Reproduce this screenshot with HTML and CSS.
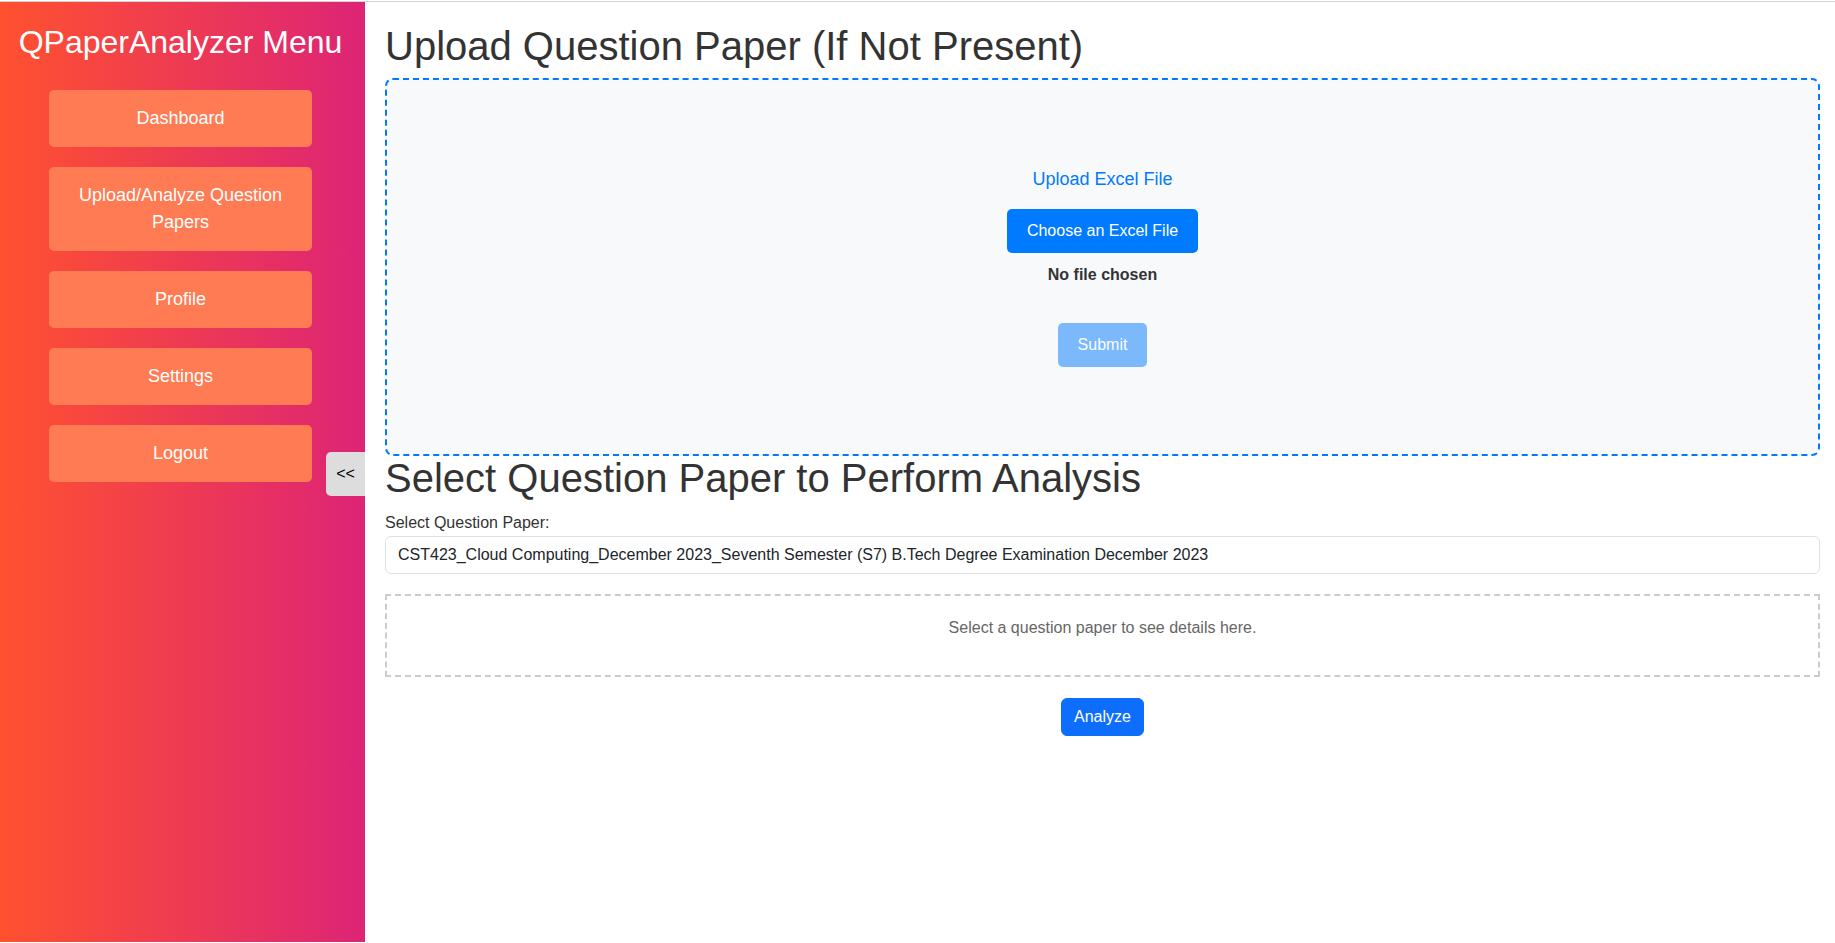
FILE: index.html
```html
<!DOCTYPE html>
<html lang="en">
<head>
<meta charset="utf-8">
<title>QPaperAnalyzer</title>
<link rel="stylesheet" href="styles.css">
</head>
<body>
<div class="app">
  <aside class="sidebar">
    <h2 class="sidebar-title">QPaperAnalyzer Menu</h2>
    <nav class="menu">
      <a class="menu-btn" href="#">Dashboard</a>
      <a class="menu-btn" href="#">Upload/Analyze Question Papers</a>
      <a class="menu-btn" href="#">Profile</a>
      <a class="menu-btn" href="#">Settings</a>
      <a class="menu-btn" href="#">Logout</a>
    </nav>
    <button class="toggle" type="button">&lt;&lt;</button>
  </aside>
  <main class="main">
    <h1 class="page-title">Upload Question Paper (If Not Present)</h1>
    <form class="upload-box">
      <div class="upload-label">Upload Excel File</div>
      <label class="choose-btn">Choose an Excel File</label>
      <div class="file-status">No file chosen</div>
      <button class="submit-btn" type="button" disabled>Submit</button>
    </form>
    <h1 class="page-title">Select Question Paper to Perform Analysis</h1>
    <label class="field-label" for="paper">Select Question Paper:</label>
    <select class="paper-select" id="paper">
      <option>CST423_Cloud Computing_December 2023_Seventh Semester (S7) B.Tech Degree Examination December 2023</option>
    </select>
    <div class="details-box">
      <p class="details-text">Select a question paper to see details here.</p>
    </div>
    <div class="analyze-row">
      <button class="analyze-btn" type="button">Analyze</button>
    </div>
  </main>
</div>
</body>
</html>
```

FILE: styles.css
```css
* {
  box-sizing: border-box;
}

html, body {
  margin: 0;
  padding: 0;
  background: #fff;
}

body {
  font-family: "Liberation Sans", Arial, sans-serif;
  font-size: 16px;
  line-height: 1.5;
  color: #333;
}

.app {
  display: flex;
  margin-top: 1px;
  border-top: 1px solid #d3d3d3;
  min-height: calc(100vh - 2px);
}

.sidebar {
  position: relative;
  width: 365px;
  flex-shrink: 0;
  padding: 22px 4px 0 0;
  background: linear-gradient(to right, #ff512f, #dd2476);
}

.sidebar-title {
  margin: 0 0 30px;
  font-size: 32px;
  font-weight: normal;
  line-height: 36px;
  color: #fff;
  text-align: center;
  white-space: nowrap;
}

.menu {
  display: flex;
  flex-direction: column;
  align-items: center;
  gap: 20px;
}

.menu-btn {
  display: block;
  width: 263px;
  padding: 15px 20px;
  background: #ff7b54;
  color: #fff;
  font-size: 18px;
  line-height: 27px;
  text-align: center;
  text-decoration: none;
  border-radius: 5px;
}

.toggle {
  position: absolute;
  right: 0;
  top: 450px;
  width: 39px;
  height: 44px;
  padding: 0;
  border: none;
  border-radius: 5px 0 0 5px;
  background: #ddd;
  color: #000;
  font-family: "Liberation Sans", Arial, sans-serif;
  font-size: 16px;
}

.main {
  flex: 1;
  min-width: 0;
  padding: 22px 15px 0 20px;
}

.page-title {
  margin: 0 0 9px;
  font-size: 40px;
  font-weight: 500;
  line-height: 45px;
  color: #333;
}

.upload-box {
  display: flex;
  flex-direction: column;
  align-items: center;
  justify-content: center;
  height: 378px;
  padding-bottom: 3px;
  margin: 0;
  border: 2px dashed #007bff;
  border-radius: 8px;
  background: #f8f9fa;
}

.upload-box + .page-title {
  margin-bottom: 10px;
}

.upload-label {
  color: #007bff;
  font-size: 18px;
  line-height: 27px;
  padding-top: 2px;
  margin-bottom: 16px;
}

.choose-btn {
  display: block;
  padding: 10px 20px;
  background: #007bff;
  color: #fff;
  font-size: 16px;
  line-height: 24px;
  border-radius: 5px;
  margin-bottom: 10px;
  cursor: pointer;
}

.file-status {
  font-weight: bold;
  line-height: 24px;
  color: #333;
  margin-bottom: 36px;
}

.submit-btn {
  padding: 10px 20px;
  border: none;
  border-radius: 5px;
  background: #007bff;
  opacity: 0.5;
  color: #fff;
  font-family: "Liberation Sans", Arial, sans-serif;
  font-size: 16px;
  line-height: 24px;
}

.field-label {
  display: block;
  line-height: 24px;
  margin-bottom: 1px;
  color: #333;
}

.paper-select {
  display: block;
  width: 100%;
  height: 38px;
  padding: 6px 12px;
  border: 1px solid #dee2e6;
  border-radius: 6px;
  background: #fff;
  color: #212529;
  font-family: "Liberation Sans", Arial, sans-serif;
  font-size: 16px;
  line-height: 24px;
  appearance: none;
  -webkit-appearance: none;
  margin-bottom: 20px;
}

.details-box {
  padding: 20px;
  border: 2px dashed #ccc;
  text-align: center;
}

.details-text {
  margin: 0 0 15px;
  color: #666;
  line-height: 24px;
}

.analyze-row {
  text-align: center;
  margin-top: 21px;
}

.analyze-btn {
  padding: 6px 12px;
  border: 1px solid #0d6efd;
  border-radius: 6px;
  background: #0d6efd;
  color: #fff;
  font-family: "Liberation Sans", Arial, sans-serif;
  font-size: 16px;
  line-height: 24px;
}
```
